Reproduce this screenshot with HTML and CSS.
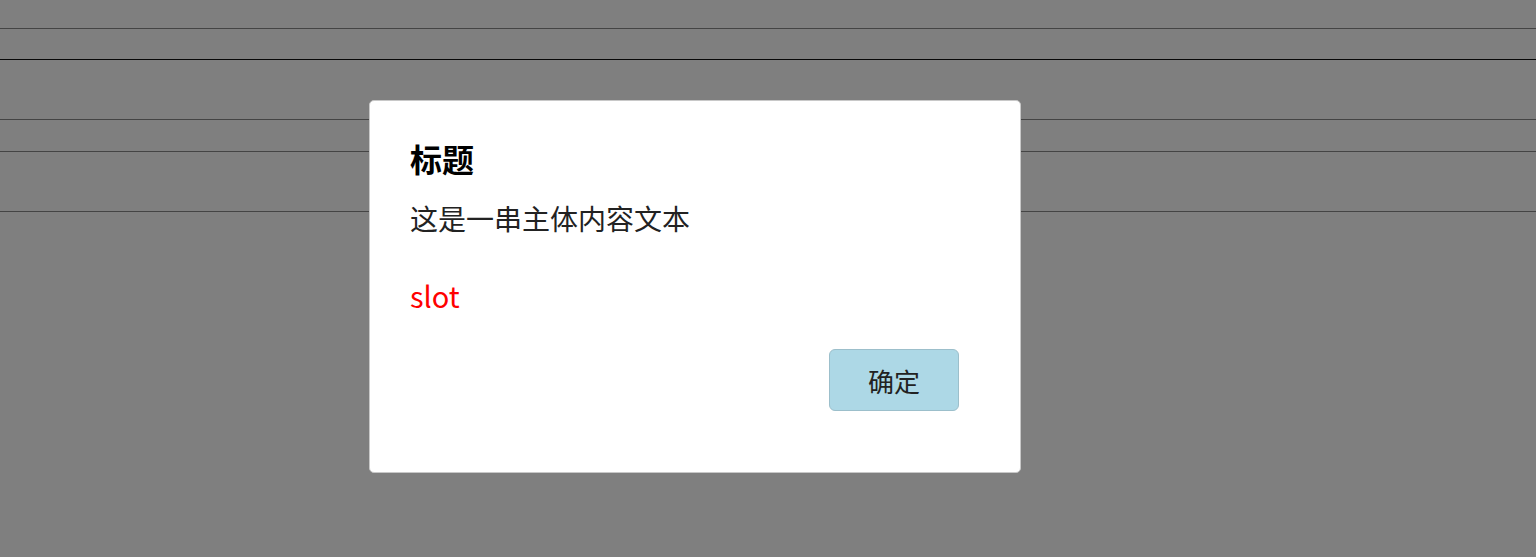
FILE: index.html
```html
<!DOCTYPE html>
<html lang="zh-CN">
<head>
    <meta charset="UTF-8">
    <meta name="viewport" content="width=device-width, initial-scale=1.0">
    <title>Dialog</title>
    <link rel="stylesheet" href="styles.css">
</head>
<body>
    <div class="page">
        <div class="row row-a"></div>
        <div class="row row-b"></div>
        <div class="row row-c"></div>
        <div class="row row-d"></div>
        <div class="row row-e"></div>
    </div>

    <div class="mask"></div>

    <div class="dialog">
        <h2 class="dialog-title">标题</h2>
        <p class="dialog-body">这是一串主体内容文本</p>
        <div class="dialog-slot">slot</div>
        <div class="dialog-footer">
            <button class="btn-ok">确定</button>
        </div>
    </div>
</body>
</html>
```

FILE: styles.css
```css
body {
    margin: 0;
    background: #fff;
    font-family: "Noto Sans CJK SC", "Noto Sans", sans-serif;
}

.row {
    border-bottom: 1px solid #888;
}

.row-a { height: 28px; }
.row-b { height: 30px; border-bottom-color: #111; }
.row-c { height: 59px; }
.row-d { height: 31px; }
.row-e { height: 59px; }

.mask {
    position: fixed;
    inset: 0;
    background: rgba(0, 0, 0, 0.5);
}

.dialog {
    position: fixed;
    top: 100px;
    left: 369px;
    width: 652px;
    height: 373px;
    box-sizing: border-box;
    padding: 37px 61px 61px 40px;
    background: #fff;
    border: 1px solid #c8c8c8;
    border-radius: 5px;
    display: flex;
    flex-direction: column;
}

.dialog-title {
    margin: 0;
    font-size: 32px;
    line-height: 40px;
    font-weight: bold;
    color: #000;
}

.dialog-body {
    margin: 20px 0 0;
    font-size: 28px;
    line-height: 40px;
    color: #222;
}

.dialog-slot {
    margin-top: 37px;
    font-size: 29px;
    line-height: 40px;
    color: #f00;
}

.dialog-footer {
    margin-top: auto;
    display: flex;
    justify-content: flex-end;
}

.btn-ok {
    width: 130px;
    height: 62px;
    background: #add8e6;
    border: 1px solid #9cbfcb;
    border-radius: 6px;
    font-family: inherit;
    font-size: 26px;
    color: #222;
    cursor: pointer;
}
```
